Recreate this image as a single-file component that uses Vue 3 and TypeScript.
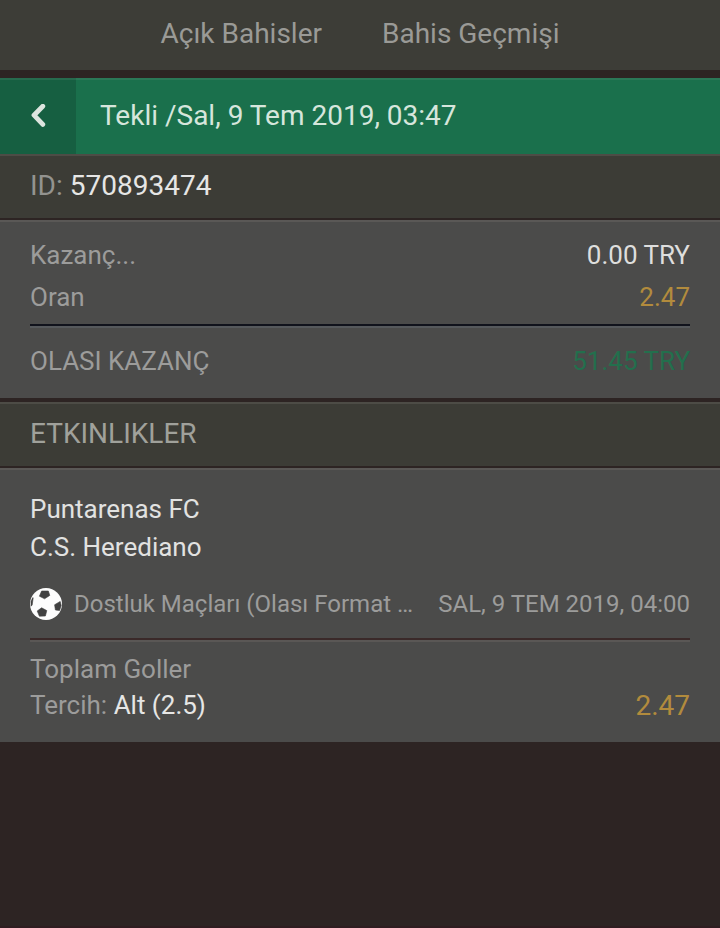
<script setup lang="ts">
interface SummaryRow {
  label: string
  value: string
  tone: 'plain' | 'odds' | 'win'
}

const tabs: string[] = ['Açık Bahisler', 'Bahis Geçmişi']

const stakes: SummaryRow[] = [
  { label: 'Kazanç...', value: '0.00 TRY', tone: 'plain' },
  { label: 'Oran', value: '2.47', tone: 'odds' },
]

const payout: SummaryRow = { label: 'OLASI KAZANÇ', value: '51.45 TRY', tone: 'win' }

const teams: string[] = ['Puntarenas FC', 'C.S. Herediano']
</script>

<template>
  <main class="page">
    <nav class="tabs">
      <a v-for="tab in tabs" :key="tab" href="#" class="tab">{{ tab }}</a>
    </nav>

    <header class="titlebar">
      <button type="button" class="back" aria-label="Geri">
        <svg class="chevron" viewBox="0 0 16 24" aria-hidden="true">
          <path d="M12.8 2.2 4 11.2l8.8 9.2" />
        </svg>
      </button>
      <h1 class="title">Tekli /Sal, 9 Tem 2019, 03:47</h1>
    </header>

    <div class="band">
      <span class="muted">ID:</span> <span class="bright">570893474</span>
    </div>

    <section class="panel summary">
      <dl class="rows">
        <div v-for="row in stakes" :key="row.label" class="row">
          <dt>{{ row.label }}</dt>
          <dd :class="row.tone">{{ row.value }}</dd>
        </div>
      </dl>
      <dl class="rows total">
        <div class="row">
          <dt>{{ payout.label }}</dt>
          <dd :class="payout.tone">{{ payout.value }}</dd>
        </div>
      </dl>
    </section>

    <h2 class="band events">ETKINLIKLER</h2>

    <section class="panel event">
      <p v-for="team in teams" :key="team" class="team">{{ team }}</p>
      <div class="meta">
        <svg class="ball" viewBox="0 0 32 32" aria-hidden="true">
          <circle class="ball-skin" cx="16" cy="16" r="16" />
          <path
            class="ball-patch"
            d="M11.6 3 18.4 3 19.8 7.4 14.6 10.8 9.4 8.2Z M11.6 19.8 16.8 22.6 15.4 28 9.4 28.2 7.2 23Z M30.2 13.4 31.2 17.4 29.6 22.6 25.4 22 24.6 16.8Z M2.6 9.8 3.2 9.8 2.2 17 1 18.2 1 13.6Z"
          />
        </svg>
        <span class="league">Dostluk Maçları (Olası Format …</span>
        <time class="kickoff" datetime="2019-07-09T04:00">SAL, 9 TEM 2019, 04:00</time>
      </div>
      <div class="pick">
        <div class="pick-text">
          <p>Toplam Goller</p>
          <p>Tercih: <span class="bright">Alt (2.5)</span></p>
        </div>
        <span class="pick-odds odds">2.47</span>
      </div>
    </section>
  </main>
</template>

<style>
body {
  margin: 0;
  background: #2d2423;
}
</style>

<style scoped>
.page {
  box-sizing: border-box;
  min-height: 100vh;
  border-bottom: 2px solid #2f1d21;
  background: #2d2423;
  color: #9c9c9b;
  font-family: Roboto, "Liberation Sans", sans-serif;
  font-size: 26px;
  line-height: 36px;
}

h1,
h2,
p,
dl,
dd {
  margin: 0;
  font-weight: 400;
}

.tabs {
  display: flex;
  justify-content: center;
  gap: 60px;
  padding: 16px 30px 18px;
  background: #3d3d37;
}

.tab {
  color: #9a9a96;
  font-size: 28px;
  text-decoration: none;
}

.titlebar {
  display: flex;
  margin-top: 8px;
  background: #1a704c;
  box-shadow: inset 0 2px #2b7757;
}

.back {
  display: flex;
  align-items: center;
  justify-content: center;
  width: 76px;
  padding: 0;
  border: 0;
  background: #165f41;
  box-shadow: inset 0 2px #276a4e;
}

.chevron {
  width: 16px;
  height: 24px;
  fill: none;
  stroke: #dde5df;
  stroke-width: 4.8;
  stroke-linecap: round;
  stroke-linejoin: round;
}

.title {
  padding: 20px 24px;
  color: #d6e6dc;
  font-size: 28px;
}

.band {
  padding: 14px 30px;
  background: #3c3c36;
  box-shadow: inset 0 2px #4d4c46;
  font-size: 28px;
}

.events {
  margin-top: 4px;
  color: #a0a19b;
}

.muted {
  color: #93938f;
}

.bright {
  color: #e6e6e5;
}

.panel {
  margin-top: 2px;
  padding: 0 30px;
  background: #4b4b4a;
  box-shadow: inset 0 2px #5a5856;
}

.summary {
  padding-top: 14px;
  padding-bottom: 16px;
}

.row {
  display: flex;
  justify-content: space-between;
  line-height: 42px;
}

.rows.total {
  margin-top: 6px;
  padding-top: 14px;
  border-top: 2px solid #11131c;
  box-shadow: inset 0 2px #56595c;
}

.plain {
  color: #dededd;
}

.odds {
  color: #b28b3d;
}

.win {
  color: #236f4d;
}

.event {
  padding-top: 22px;
  padding-bottom: 19px;
}

.team {
  color: #e2e2e1;
  line-height: 38px;
}

.meta {
  display: flex;
  align-items: center;
  margin-top: 20px;
  padding-bottom: 16px;
  font-size: 24px;
}

.ball {
  flex: none;
  width: 32px;
  height: 32px;
}

.ball-skin {
  fill: #fdfdfd;
}

.ball-patch {
  fill: #414141;
  stroke: #414141;
  stroke-width: 0.6;
  stroke-linejoin: round;
}

.league {
  flex: 1;
  min-width: 0;
  margin: 0 24px 0 12px;
  overflow: hidden;
  text-overflow: ellipsis;
  white-space: nowrap;
}

.kickoff {
  white-space: nowrap;
}

.pick {
  display: flex;
  align-items: flex-end;
  justify-content: space-between;
  padding-top: 11px;
  border-top: 2px solid #3a2929;
  box-shadow: inset 0 2px #5a5755;
}

.pick-odds {
  font-size: 28px;
  line-height: 34px;
}
</style>
